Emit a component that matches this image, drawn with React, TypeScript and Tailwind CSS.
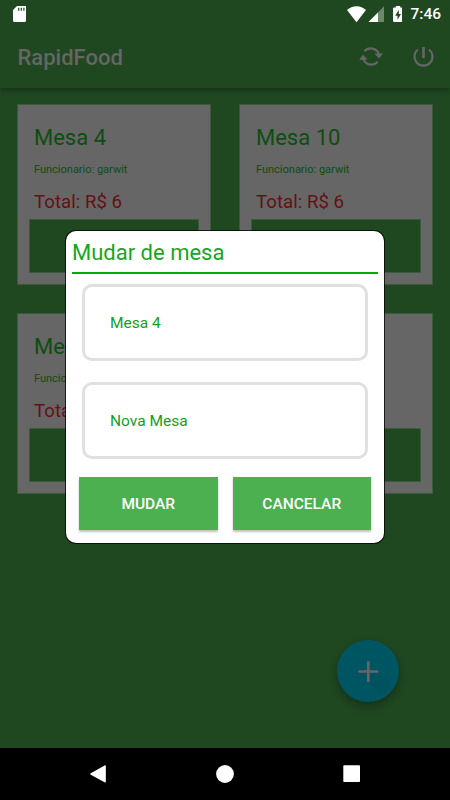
import React from 'react';

interface Table {
  name: string;
  employee: string;
  total: string;
}

const tables: Table[] = [
  { name: 'Mesa 4', employee: 'garwit', total: 'R$ 6' },
  { name: 'Mesa 10', employee: 'garwit', total: 'R$ 6' },
  { name: 'Mesa 5', employee: 'garwit', total: 'R$ 6' },
  { name: 'Mesa 7', employee: 'garwit', total: 'R$ 6' },
];

const StatusBar: React.FC = () => (
  <div className="flex h-7 items-center justify-between pl-[13px] pr-[9px] text-white">
    <svg className="h-[17px] w-[13px]" viewBox="0 1 13 17">
      <path fill="#fff" d="M4.5 0.5H11.5Q13 0.5 13 2V15.5Q13 17 11.5 17H1.5Q0 17 0 15.5V5Z" />
      <path stroke="#1f4720" strokeWidth="1.2" d="M5.7 2.7V5.7M8.3 2.7V5.7M10.9 2.7V5.7" />
    </svg>
    <div className="flex items-center">
      <svg className="h-[17px] w-[56px]" viewBox="346 5 56 17">
        <path fill="#fff" d="M356.5 21.2L347 9Q351 5.2 356.5 5.2T366 9Z" />
        <path fill="#fff" fillOpacity=".35" d="M384 5.3V21H368.5Z" />
        <path fill="#fff" d="M378 11.4V21H368.5Z" />
        <path fill="#fff" d="M395.8 5h4.4v1.6h1.6q1.2 0 1.2 1.2v12q0 1.2-1.2 1.2h-7.6q-1.2 0-1.2-1.2v-12q0-1.2 1.2-1.2h1.6Z" />
        <path fill="#1f4720" d="M398.8 8.8L395.2 14.7H397.5V18.8L401 12.9H398.8Z" />
      </svg>
      <span className="ml-2 pt-px text-[15.5px] font-medium leading-none">7:46</span>
    </div>
  </div>
);

const Toolbar: React.FC = () => (
  <div className="flex h-[60px] items-center justify-between pl-[17.5px] pr-[15px] text-[#666]">
    <h1 className="text-[22px] font-medium leading-none">RapidFood</h1>
    <div className="flex items-center gap-7">
      <svg className="h-6 w-6" viewBox="359 45.5 24 24" fill="none" stroke="currentColor" strokeWidth="2.2">
        <path d="M364.4 50.8A8.6 8.6 0 0 1 379 54" />
        <path d="M377.6 61.2A8.6 8.6 0 0 1 363 58" />
        <path fill="currentColor" stroke="none" d="M374.4 53H383L379 58Z" />
        <path fill="currentColor" stroke="none" d="M359 59.2L363 54.2L367.6 59.2Z" />
      </svg>
      <svg className="h-6 w-6" viewBox="411 45.5 24 24" fill="none" stroke="currentColor" strokeWidth="2.1">
        <path strokeWidth="2.6" d="M423.5 46.5V57.5" />
        <path d="M418 49A9 9 0 1 0 429 49" />
      </svg>
    </div>
  </div>
);

const TableCard: React.FC<{ table: Table }> = ({ table }) => (
  <div className="flex h-[181px] flex-col border border-[#3c5a3d] bg-[#666] px-[11px]">
    <div className="flex flex-col whitespace-nowrap pl-[5px]">
      <span className="mt-[19px] text-[22px] leading-[28px] text-[#0e4d11]">{table.name}</span>
      <span className="mt-[11px] text-[11px] leading-[14px] text-[#0e4d11]">Funcionario: {table.employee}</span>
      <span className="mt-[13px] text-[18.7px] leading-6 text-[#661014]">Total: {table.total}</span>
    </div>
    <div className="mt-[5px] h-[54px] w-[170px] border border-[#3c5a3d] bg-[#1f4720]" />
  </div>
);

const Field: React.FC<{ value: string }> = ({ value }) => (
  <div className="flex h-[77px] items-center rounded-[10px] border-[3px] border-[#e0e0e0] pl-[25px] pt-[3px] text-[15.5px] text-[#14a01c]">
    {value}
  </div>
);

const ActionButton: React.FC<{ label: string }> = ({ label }) => (
  <button className="h-[53px] flex-1 bg-[#4caf50] pt-[2px] text-[15.5px] font-medium text-white shadow-[0_2px_2px_rgba(0,0,0,0.25)]">
    {label}
  </button>
);

const MoveTableDialog: React.FC = () => (
  <div className="absolute left-[66px] top-[231px] h-[312px] w-[318px] rounded-[10px] bg-white px-[6px] shadow-[0_0_0_1px_rgba(0,0,0,0.75)]">
    <h2 className="h-[43px] border-b-2 border-[#06ac06] pt-[7px] text-[22px] leading-[30px] text-[#14a81c]">
      Mudar de mesa
    </h2>
    <div className="flex flex-col gap-[21px] px-[10px] pt-[10px]">
      <Field value="Mesa 4" />
      <Field value="Nova Mesa" />
    </div>
    <div className="mt-[18px] flex gap-[15px] px-[7px]">
      <ActionButton label="MUDAR" />
      <ActionButton label="CANCELAR" />
    </div>
  </div>
);

const NavigationBar: React.FC = () => (
  <div className="flex h-[52px] items-center bg-black">
    <svg className="h-[52px] w-[450px]" viewBox="0 748 450 52" fill="#fff">
      <path d="M105.8 765.6V782.2L105 782.6L90.3 774.4V773.6L105 765.2Z" />
      <circle cx="225" cy="774" r="8.9" />
      <rect x="343.3" y="765.3" width="16.7" height="16.7" rx="0.8" />
    </svg>
  </div>
);

const App: React.FC = () => {
  return (
    <div className="relative flex h-[800px] w-[450px] flex-col overflow-hidden bg-[#1f4720] font-[Roboto,sans-serif]">
      <header className="shadow-[0_2px_5px_rgba(0,0,0,0.3)]">
        <StatusBar />
        <Toolbar />
      </header>

      <main className="flex-1 pl-[17px] pt-4">
        <div className="grid grid-cols-[194px_194px] gap-7">
          {tables.map((table) => (
            <TableCard key={table.name} table={table} />
          ))}
        </div>
      </main>

      <NavigationBar />

      {/* Floating add button */}
      <button className="absolute left-[337px] top-[640px] h-[62px] w-[62px] rounded-full bg-[#005562] shadow-[0_4px_9px_rgba(0,0,0,0.3)]">
        <svg className="h-[62px] w-[62px]" viewBox="0 0 62 62">
          <path fill="#00525e" d="M21 33L43 55Q50 51 54 44L41 31L32 34Z" />
          <path stroke="#666" strokeWidth="2.7" d="M21.3 31.5H41.3M31.3 21.3V42" />
        </svg>
      </button>

      <MoveTableDialog />
    </div>
  );
};

export default App;
